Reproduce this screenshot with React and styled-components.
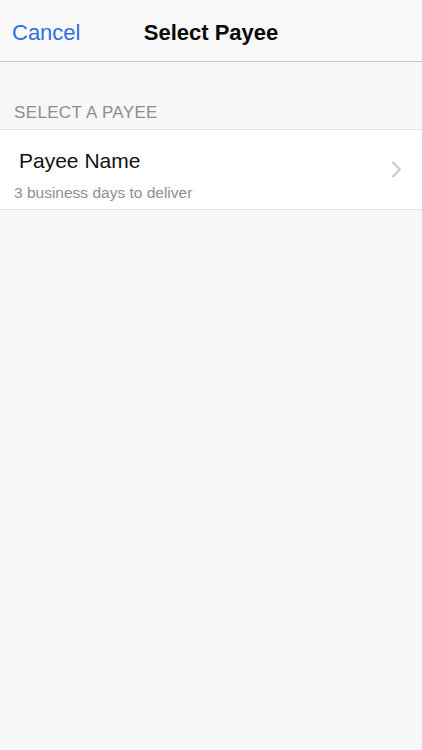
import React from "react";
import styled, { createGlobalStyle } from "styled-components";

const Global = createGlobalStyle`
  html, body {
    margin: 0;
    padding: 0;
    background: #f7f7f7;
    font-family: "Liberation Sans", Arial, sans-serif;
    -webkit-font-smoothing: antialiased;
  }
`;

const Screen = styled.div`
  min-height: 750px;
  background: #f7f7f7;
  display: flex;
  flex-direction: column;
`;

const NavBar = styled.header`
  height: 62px;
  box-sizing: border-box;
  padding-top: 4px;
  background: #f8f8f8;
  border-bottom: 1px solid #c6c6c8;
  display: grid;
  grid-template-columns: 1fr auto 1fr;
  align-items: center;
`;

const NavButton = styled.button`
  justify-self: start;
  border: none;
  background: none;
  padding: 0 0 0 12px;
  margin: 0;
  font-family: inherit;
  font-size: 22px;
  line-height: 25px;
  color: #2e6fdd;
  cursor: pointer;
`;

const NavTitle = styled.h1`
  margin: 0;
  font-size: 22px;
  line-height: 25px;
  font-weight: 700;
  color: #0a0a0a;
`;

const SectionHeader = styled.div`
  padding: 41px 14px 6px;
  font-size: 17px;
  line-height: 20px;
  letter-spacing: 0.35px;
  color: #8d8d92;
  text-transform: uppercase;
`;

const List = styled.ul`
  list-style: none;
  margin: 0;
  padding: 0;
  background: #fff;
  border-top: 1px solid #e3e3e5;
  border-bottom: 1px solid #e3e3e5;
`;

const Row = styled.li`
  display: flex;
  align-items: center;
  padding: 19px 20px 7px 14px;
`;

const RowText = styled.div`
  flex: 1;
  display: flex;
  flex-direction: column;
  gap: 11px;
`;

const RowTitle = styled.span`
  padding-left: 5px;
  font-size: 21px;
  line-height: 24px;
  color: #111;
`;

const RowSubtitle = styled.span`
  font-size: 15.5px;
  line-height: 18px;
  color: #8e8e93;
`;

const Chevron = styled.svg`
  width: 11px;
  height: 17px;
  margin-top: -12px;
  flex-shrink: 0;
`;

export default function App() {
  return (
    <Screen>
      <Global />
      <NavBar>
        <NavButton>Cancel</NavButton>
        <NavTitle>Select Payee</NavTitle>
        <span />
      </NavBar>
      <SectionHeader>Select a Payee</SectionHeader>
      <List>
        <Row>
          <RowText>
            <RowTitle>Payee Name</RowTitle>
            <RowSubtitle>3 business days to deliver</RowSubtitle>
          </RowText>
          <Chevron viewBox="0 0 11 17">
            <polyline
              points="2,1.5 9,8.5 2,15.5"
              fill="none"
              stroke="#c7c7cc"
              strokeWidth="2"
              strokeLinecap="round"
              strokeLinejoin="round"
            />
          </Chevron>
        </Row>
      </List>
    </Screen>
  );
}
